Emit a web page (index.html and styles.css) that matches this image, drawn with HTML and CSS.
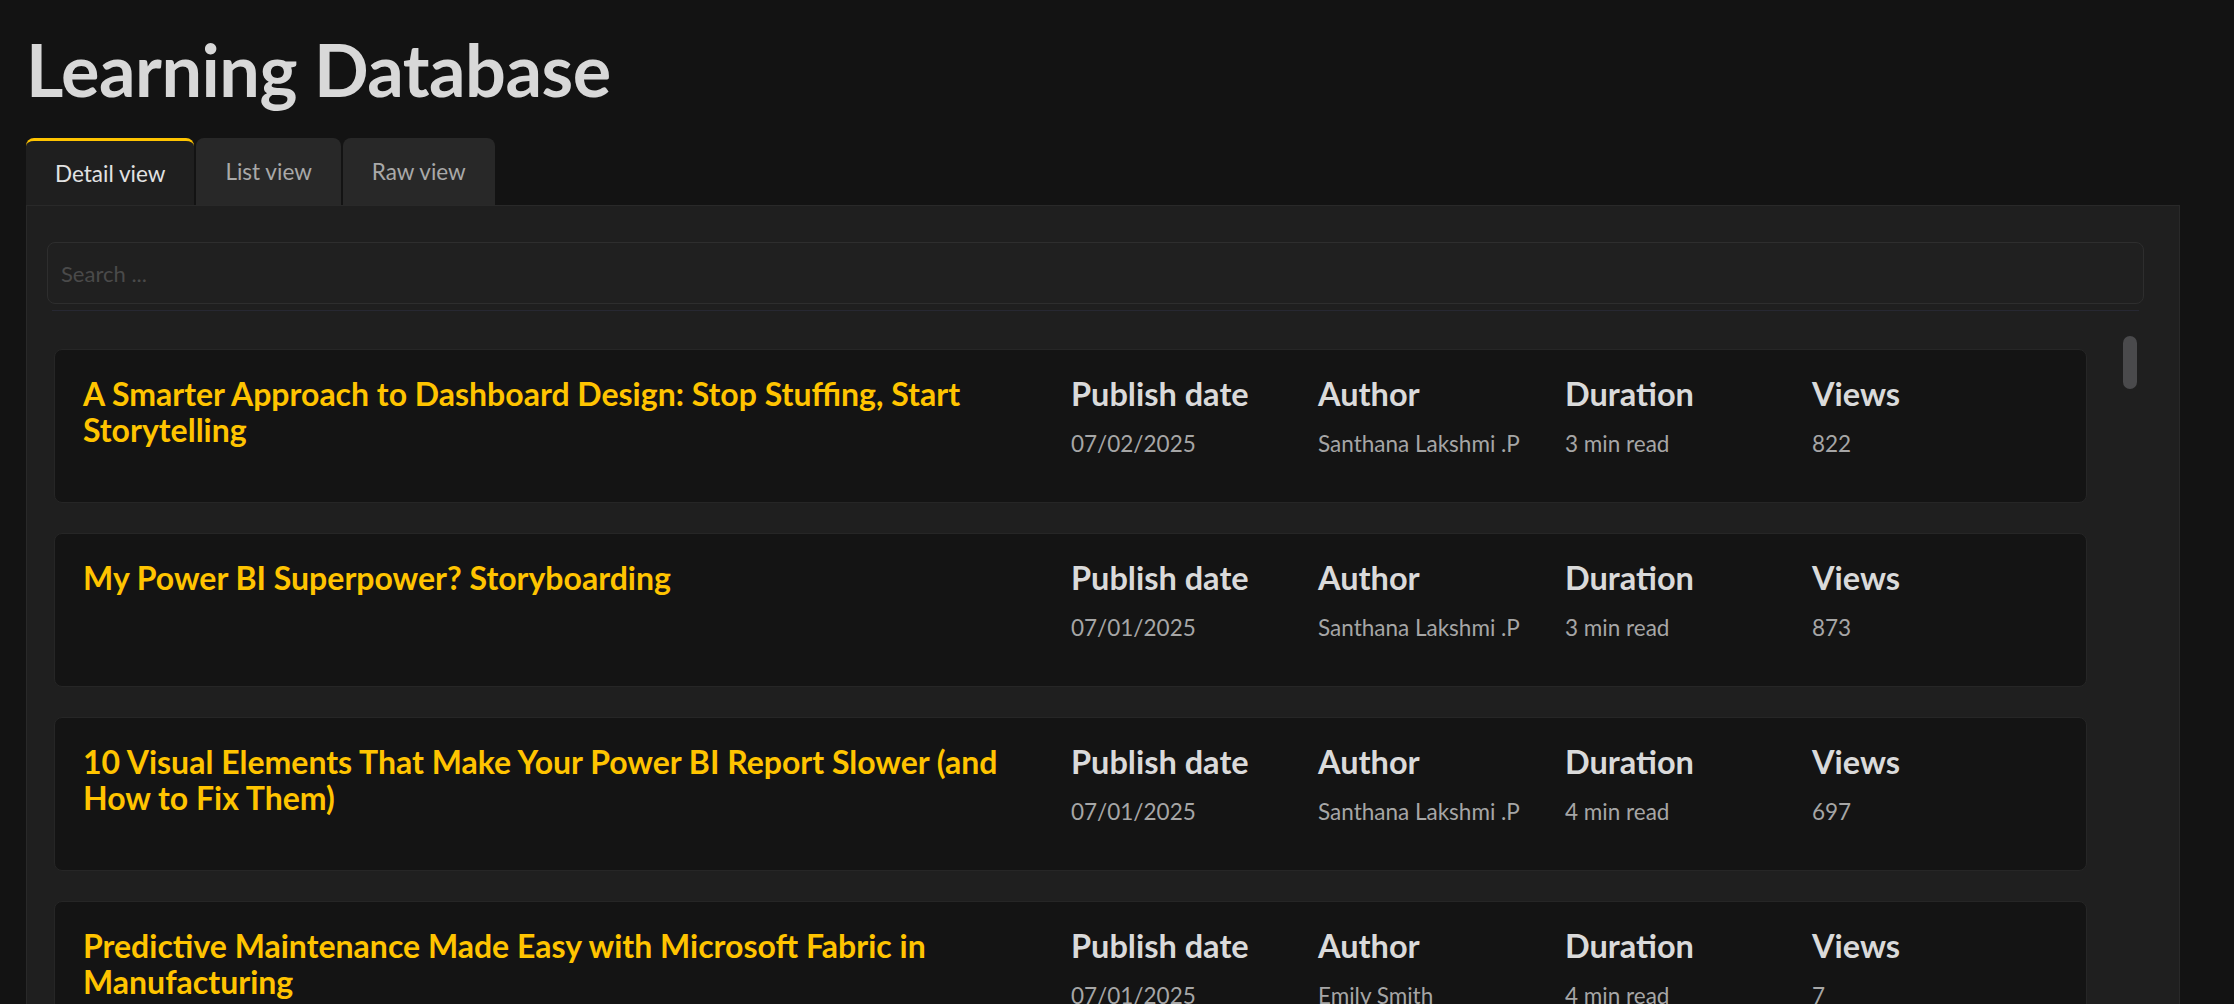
FILE: index.html
```html
<!DOCTYPE html>
<html>

<head>
  <title>Learning Database</title>
  <link rel="stylesheet" href="styles.css">
</head>

<body>
  <h1 class="page-title">Learning Database</h1>

  <div class="tab">
    <ul class="tab-header">
      <li class="active">Detail view</li>
      <li>List view</li>
      <li>Raw view</li>
    </ul>
    <div class="tab-body">
      <input class="search" type="text" placeholder="Search ...">
      <div class="divider"></div>

      <div class="list-wrap">
        <div class="list">
          <div class="card">
            <div class="card-title">A Smarter Approach to Dashboard Design: Stop Stuffing, Start Storytelling</div>
            <div class="field">
              <div class="field-label">Publish date</div>
              <div class="field-value">07/02/2025</div>
            </div>
            <div class="field">
              <div class="field-label">Author</div>
              <div class="field-value">Santhana Lakshmi .P</div>
            </div>
            <div class="field">
              <div class="field-label">Duration</div>
              <div class="field-value">3 min read</div>
            </div>
            <div class="field">
              <div class="field-label">Views</div>
              <div class="field-value">822</div>
            </div>
          </div>

          <div class="card">
            <div class="card-title">My Power BI Superpower? Storyboarding</div>
            <div class="field">
              <div class="field-label">Publish date</div>
              <div class="field-value">07/01/2025</div>
            </div>
            <div class="field">
              <div class="field-label">Author</div>
              <div class="field-value">Santhana Lakshmi .P</div>
            </div>
            <div class="field">
              <div class="field-label">Duration</div>
              <div class="field-value">3 min read</div>
            </div>
            <div class="field">
              <div class="field-label">Views</div>
              <div class="field-value">873</div>
            </div>
          </div>

          <div class="card">
            <div class="card-title">10 Visual Elements That Make Your Power BI Report Slower (and How to Fix Them)</div>
            <div class="field">
              <div class="field-label">Publish date</div>
              <div class="field-value">07/01/2025</div>
            </div>
            <div class="field">
              <div class="field-label">Author</div>
              <div class="field-value">Santhana Lakshmi .P</div>
            </div>
            <div class="field">
              <div class="field-label">Duration</div>
              <div class="field-value">4 min read</div>
            </div>
            <div class="field">
              <div class="field-label">Views</div>
              <div class="field-value">697</div>
            </div>
          </div>

          <div class="card">
            <div class="card-title">Predictive Maintenance Made Easy with Microsoft Fabric in Manufacturing</div>
            <div class="field">
              <div class="field-label">Publish date</div>
              <div class="field-value">07/01/2025</div>
            </div>
            <div class="field">
              <div class="field-label">Author</div>
              <div class="field-value">Emily Smith</div>
            </div>
            <div class="field">
              <div class="field-label">Duration</div>
              <div class="field-value">4 min read</div>
            </div>
            <div class="field">
              <div class="field-label">Views</div>
              <div class="field-value">7</div>
            </div>
          </div>
        </div>

        <!-- fake scrollbar thumb, list keeps scrolling below the fold -->
        <div class="scroll-thumb"></div>
      </div>
    </div>
  </div>
</body>

</html>
```

FILE: styles.css
```css
/*  reset */
* {
  margin: 0;
  padding: 0;
  box-sizing: border-box;
}

ul,
li {
  list-style: none;
}

html,
body {
  height: 100%;
  overflow: hidden;
}

body {
  display: flex;
  flex-direction: column;
  padding-left: 26px;
  padding-right: 54px;
  background-color: #131313;
  color: #d6d6d6;
  font-family: "Lato", "Noto Sans", sans-serif;
}

.page-title {
  margin-top: 26px;
  font-size: 72px;
  font-weight: 700;
  line-height: 1.2;
  color: #d8d8d8;
  letter-spacing: -0.5px;
}

.tab {
  flex: 1;
  display: flex;
  flex-direction: column;
  margin-top: 26px;
  min-height: 0;
}

.tab .tab-header {
  display: flex;
  gap: 2px;
  height: 67px;
}

.tab .tab-header li {
  display: flex;
  align-items: center;
  padding: 0 29px;
  border-radius: 8px 8px 0 0;
  background-color: #282828;
  color: #a9a9a9;
  font-size: 22.5px;
  cursor: pointer;
}

.tab .tab-header li.active {
  background-color: #1f1f1f;
  border-top: 3px solid #ffc400;
  color: #e2e2e2;
}

.tab .tab-body {
  flex: 1;
  display: flex;
  flex-direction: column;
  min-height: 0;
  padding: 36px 35px 0 20px;
  background-color: #1f1f1f;
  border: 1px solid #292929;
  border-bottom: none;
}

.search {
  width: 100%;
  height: 62px;
  padding: 0 13px;
  background-color: #202020;
  border: 1px solid #2e2e2e;
  border-radius: 8px;
  color: #d6d6d6;
  font-family: inherit;
  font-size: 22px;
  outline: none;
}

.search::placeholder {
  color: #4a4a4a;
}

.divider {
  height: 1px;
  margin: 6px 5px 0 5px;
  background-color: #272832;
}

.list-wrap {
  position: relative;
  flex: 1;
  min-height: 0;
  overflow: hidden;
  padding: 38px 57px 0 7px;
}

.scroll-thumb {
  position: absolute;
  top: 25px;
  right: 7px;
  width: 14px;
  height: 53px;
  border-radius: 7px;
  background-color: #4a4a4c;
}

.card {
  display: grid;
  grid-template-columns: minmax(0, 1fr) repeat(4, 224px);
  column-gap: 23px;
  height: 154px;
  margin-bottom: 30px;
  padding: 26px 50px 0 28px;
  background-color: #141414;
  border: 1px solid #262626;
  border-radius: 8px;
}

.card-title {
  font-size: 32px;
  font-weight: 700;
  line-height: 36px;
  color: #ffc400;
}

.field-label {
  font-size: 32.5px;
  font-weight: 700;
  line-height: 36px;
  color: #dadada;
}

.field-value {
  margin-top: 16px;
  font-size: 22.5px;
  line-height: 32px;
  color: #a6a6a6;
}
```
